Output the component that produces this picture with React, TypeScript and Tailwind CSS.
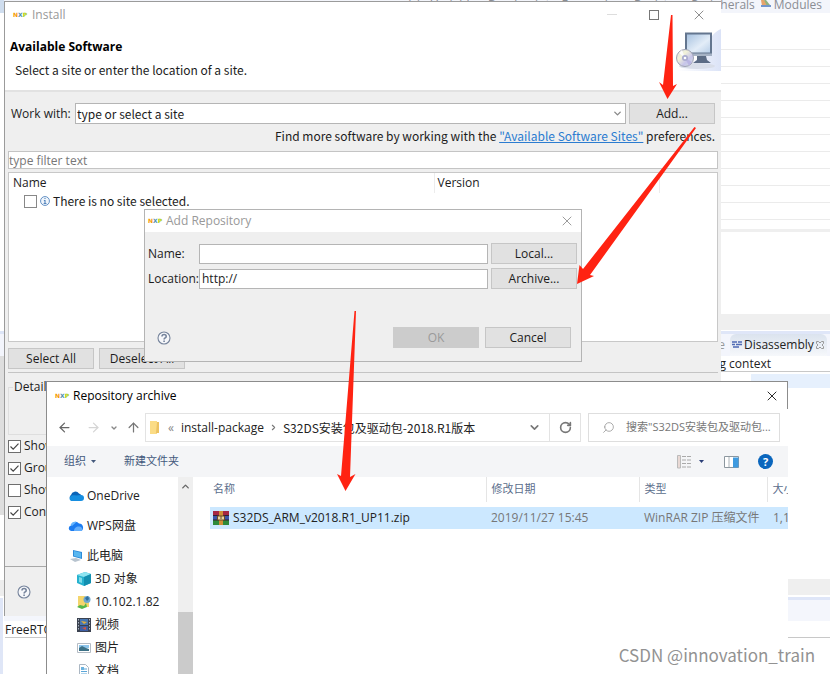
import React from 'react';
import { ArrowLeft, ArrowRight, ArrowUp, ChevronDown, ChevronRight, ChevronUp, RotateCw, Search, X } from 'lucide-react';

const NxpLogo: React.FC = () => (
  <span className="flex w-[13px] shrink-0 font-['DejaVu_Sans'] text-[6px] leading-none font-bold" aria-hidden="true">
    <span className="text-[#f59a00]">N</span>
    <span className="text-[#4f8fb0]">X</span>
    <span className="text-[#a8cc00]">P</span>
  </span>
);

const PushButton: React.FC<React.ButtonHTMLAttributes<HTMLButtonElement>> = ({ children, ...rest }) => (
  <button
    type="button"
    className="h-[21px] w-[86px] shrink-0 border border-[#c6c6c6] bg-[#e1e1e1] text-center leading-[18px] whitespace-nowrap disabled:border-[#cccccc] disabled:bg-[#cccccc] disabled:text-[#9a9a9a]"
    {...rest}
  >
    {children}
  </button>
);

const HelpButton: React.FC = () => (
  <button type="button" aria-label="Help" className="block size-[14px] shrink-0">
    <svg viewBox="0 0 14 14" className="size-[14px]" fill="none" stroke="#76849c">
      <circle cx="7" cy="7" r="6" fill="#f6f7fa" strokeWidth="1.1" />
      <path d="M5 5.6c0-3 4.2-2.6 4.2-.2C9.200 7 7.100 6.900 7.100 8.500" strokeWidth="1.6" />
      <path d="M7.100 9.600v1.500" strokeWidth="1.6" />
    </svg>
  </button>
);

const CheckMark: React.FC<{ label: string; checked: boolean }> = ({ label, checked }) => (
  <label className="flex h-[22px] items-center gap-[3px] whitespace-nowrap">
    <span className="relative size-[13px] shrink-0">
      <input
        type="checkbox"
        defaultChecked={checked}
        className="peer block size-[13px] appearance-none border border-[#6e6e6e] bg-white"
      />
      <svg
        viewBox="0 0 13 13"
        className="pointer-events-none absolute inset-0 hidden size-[13px] peer-checked:block"
        fill="none"
        stroke="#444"
        strokeWidth="1.2"
      >
        <path d="M2.500 6.500 5.200 9.200 10.500 3.700" />
      </svg>
    </span>
    {label}
  </label>
);

const MonitorArt: React.FC = () => (
  <svg viewBox="0 0 46 42" className="h-[42px] w-[46px]" aria-hidden="true">
    <defs>
      <linearGradient id="screen" x1="0" y1="0" x2="1" y2="1">
        <stop offset="0" stopColor="#a9c3e0" />
        <stop offset="0.6" stopColor="#e3edf8" />
        <stop offset="1" stopColor="#b9cfe8" />
      </linearGradient>
      <linearGradient id="disc" x1="0" y1="0" x2="1" y2="1">
        <stop offset="0" stopColor="#d8dce4" />
        <stop offset="0.35" stopColor="#f2f2d8" />
        <stop offset="0.65" stopColor="#c6c4ea" />
        <stop offset="1" stopColor="#d9e6dd" />
      </linearGradient>
      <linearGradient id="swoosh" x1="0" y1="0" x2="1" y2="0">
        <stop offset="0" stopColor="#ffffff" />
        <stop offset="1" stopColor="#dbe3f7" />
      </linearGradient>
    </defs>
    <path d="M46 0C34 5 34 16 28 24S10 38 2 42h44z" fill="url(#swoosh)" />
    <ellipse cx="22" cy="37" rx="18" ry="3" fill="#d9dee9" />
    <path d="M22 27h9l1 4 4 3H18l4-3z" fill="#5c6c85" />
    <path d="M10 3.500h27v23H10z" fill="#64768f" />
    <path d="M12 5.500h23v18H12z" fill="url(#screen)" />
    <path d="M10 24.500h27v2H10z" fill="#a5b2c5" />
    <circle cx="10" cy="29" r="8.500" fill="url(#disc)" stroke="#a0a3b4" />
    <path d="m10 29-6-5 3-3z" fill="#fbfbfb" />
    <path d="m10 29 7 4-3 4z" fill="#b9b5e2" />
    <circle cx="10" cy="29" r="3" fill="#aaaccf" />
    <circle cx="10" cy="29" r="1.300" fill="#fff" />
  </svg>
);

const Workbench: React.FC = () => (
  <div className="absolute inset-0 flex">
    <div className="flex w-1 shrink-0 flex-col">
      <div className="h-[13px] bg-[#cfddee]" />
      <div className="h-[318px]" />
      <div className="h-[3px] bg-[#dde5f7]" />
      <div className="h-[22px] bg-[#f3f5fc]" />
      <div className="h-[159px] bg-[#dedede]" />
      <div className="h-[65px]" />
      <div className="h-4 bg-[#ededed]" />
      <div className="mt-0.5 mr-px flex-1 bg-[#dfe6f7]" />
    </div>
    <div className="flex min-w-0 flex-1 flex-col">
      <div className="flex h-[13px] items-start justify-end gap-[6px] bg-[#f3f5fb] pr-2 text-xs leading-[9px] text-[#8a8d94]">
        <span>(x)= Variables</span>
        <span>Breakpoints</span>
        <span>Expressions</span>
        <span>Registers</span>
        <span>Peripherals</span>
        <span className="flex gap-[3px]">
          <svg viewBox="0 0 10 9" className="h-[9px] w-[10px]" aria-hidden="true">
            <path d="M0 0h3l6 6H1z" fill="#e6a46c" />
            <path d="M3 0h2l4 5-3 1z" fill="#8fb27d" />
            <path d="M0 5h10v2H0z" fill="#7295cc" />
          </svg>
          Modules
        </span>
      </div>
      <div className="flex flex-col pt-5">
        {Array.from({ length: 11 }, (_, i) => (
          <div key={i} className="h-[17px] border-b border-[#ebebeb]" />
        ))}
      </div>
      <div className="mt-[9px] h-[3px] bg-[#efefef]" />
      <div className="mt-[82px] h-4 bg-[#efefef]" />
      <div className="mt-px h-[3px] bg-[#dfe6f8]" />
      <div className="flex h-[22px] items-center justify-end bg-[#f3f5fc] pr-[3px] text-xs">
        <span className="pr-[5px] text-[#999]">Console</span>
        <span className="flex h-[22px] w-[97px] items-center gap-[2px] rounded-t-md bg-linear-to-b from-[#dbe3ee] to-[#f6f8fb] pl-[2px] whitespace-nowrap">
          <svg viewBox="0 0 10 8" className="h-2 w-[10px] shrink-0" stroke="#4e6ab4" aria-hidden="true">
            <path d="M0 1h5M6 1h4M0 3.500h3M4 3.500h6M1 6h6" strokeWidth="1.500" />
          </svg>
          Disassembly
          <svg viewBox="0 0 8 8" className="size-2 shrink-0" fill="none" stroke="#999" aria-hidden="true">
            <path d="M.5.500h2L4 2 5.500.500h2v2L6 4l1.500 1.500v2h-2L4 6 2.500 7.500h-2v-2L2 4 .500 2.500z" />
          </svg>
        </span>
      </div>
      <div className="h-4 border-b border-[#c8c8c8] pr-[59px] text-right text-xs leading-4">No debugging context</div>
      <div className="mt-0.5 ml-auto h-[14px] w-[79px] bg-[#e6f0fd]" />
      <div className="mt-[191px] h-4 bg-[#efefef]" />
      <div className="mt-0.5 h-[3px] bg-[#dfe6f8]" />
      <div className="h-[21px] bg-[#f4f6fc]" />
      <div className="ml-px h-[17px] border-b border-[#c8c8c8] text-xs leading-[18px]">FreeRTOS</div>
    </div>
  </div>
);

const InstallWindow: React.FC = () => (
  <section
    aria-label="Install"
    className="absolute top-px right-[109px] left-1 border-t border-l border-[#9b9b9b] bg-[#efefef] text-xs text-[#1c1c1c]"
  >
    <div className="flex h-[27px] items-center bg-white pr-[17px] pb-0.5 pl-2">
      <NxpLogo />
      <h1 className="pl-[6px] text-[#999]">Install</h1>
      <div className="ml-auto flex items-center gap-[32px] text-[#777]">
        <button type="button" aria-label="Minimize" className="h-px w-[10px] bg-[#ddd]" />
        <button type="button" aria-label="Maximize" className="size-[10px] border border-[#777]" />
        <button type="button" aria-label="Close" className="-mr-[3px]">
          <X size={16} strokeWidth={1.25} />
        </button>
      </div>
    </div>
    <header className="flex h-[63px] items-start justify-between border-b-2 border-[#e2e2e2] bg-white">
      <div className="pl-[5px]">
        <h2 className="pt-2 leading-5 font-bold text-black">Available Software</h2>
        <p className="pt-[3px] pl-[5px] font-['Noto_Sans_CJK_SC',sans-serif] leading-5">
          Select a site or enter the location of a site.
        </p>
      </div>
      <MonitorArt />
    </header>

    <div className="px-[3px] pt-[11px]">
      <div className="flex items-center gap-[3px] pr-[3px]">
        <label htmlFor="site" className="w-[64px] shrink-0 pl-[3px] whitespace-nowrap">Work with:</label>
        <div className="relative flex-1">
          <select
            id="site"
            className="block h-[21px] w-full appearance-none border border-[#b5b5b5] bg-white pl-px font-['Noto_Sans_CJK_SC',sans-serif] leading-[18px]"
          >
            <option>type or select a site</option>
          </select>
          <ChevronDown size={11} strokeWidth={3} className="pointer-events-none absolute top-[5px] right-[3px] text-[#888]" />
        </div>
        <PushButton>Add...</PushButton>
      </div>
      <p className="pt-[2px] pr-[3px] text-right font-['Noto_Sans_CJK_SC',sans-serif] leading-5">
        Find more software by working with the{' '}
        <a href="#sites" className="text-[#2b7cd0] underline">"Available Software Sites"</a> preferences.
      </p>
      <input
        type="text"
        aria-label="Filter"
        placeholder="type filter text"
        className="mt-[5px] block h-[18px] w-full border border-[#c4c4c4] bg-white leading-4 placeholder:text-[#777]"
      />
      <div className="mt-[3px] h-[170px] border border-[#c8c8c8] bg-white">
        <table className="w-full table-fixed text-left">
          <thead>
            <tr className="h-5">
              <th className="w-[425px] border-r border-[#ececec] pl-1 font-normal">Name</th>
              <th className="border-r border-[#ececec] pl-[3px] font-normal">Version</th>
              <th className="w-[58px]" aria-label="Spacer" />
            </tr>
          </thead>
          <tbody>
            <tr>
              <td colSpan={3}>
                <label className="flex h-4 items-center gap-[3px] pl-[15px] font-['Noto_Sans_CJK_SC',sans-serif]">
                  <input type="checkbox" className="size-[13px] appearance-none border border-[#888] bg-white" />
                  <svg viewBox="0 0 9 9" className="size-[10px]" fill="none" stroke="#5485bd" aria-hidden="true">
                    <circle cx="4.500" cy="4.500" r="4" fill="#eef4fb" strokeWidth=".8" />
                    <path d="M4.500 1.700v1M3.500 4h1v2.500M3.300 6.800h2.500" />
                  </svg>
                  There is no site selected.
                </label>
              </td>
            </tr>
          </tbody>
        </table>
      </div>
      <div className="mt-[6px] flex gap-[5px]">
        <PushButton>Select All</PushButton>
        <PushButton>Deselect All</PushButton>
      </div>
      <hr className="mt-[3px] border-[#c4c4c4]" />
      <fieldset className="mt-[4px] h-[58px] border border-[#dedede]">
        <legend className="ml-[4px] px-px leading-5">Details</legend>
      </fieldset>
      <div>
        <CheckMark label="Show only the latest versions of available software" checked />
        <CheckMark label="Group items by category" checked />
        <CheckMark label="Show only software applicable to target environment" checked={false} />
        <CheckMark label="Contact all update sites during install to find required software" checked />
      </div>
    </div>
    <footer className="mt-[43px] flex h-[50px] items-center border-t border-[#a8a8a8] pl-[12px]">
      <HelpButton />
    </footer>
  </section>
);

const AddRepositoryDialog: React.FC = () => (
  <section
    aria-label="Add Repository"
    className="absolute top-[209px] left-36 w-[438px] border border-[#b4b4b4] bg-[#efefef] text-xs text-[#1c1c1c]"
  >
    <div className="flex h-[22px] items-center bg-white pr-[6px] pl-[3px]">
      <NxpLogo />
      <h2 className="pl-[5px] text-[#999]">Add Repository</h2>
      <button type="button" aria-label="Close" className="ml-auto text-[#888]">
        <X size={16} strokeWidth={1.25} />
      </button>
    </div>
    <div className="flex flex-col gap-1 pt-[11px] pr-1 pl-[3px]">
      <div className="flex items-center gap-[3px]">
        <label htmlFor="repo-name" className="w-12 shrink-0">Name:</label>
        <input id="repo-name" type="text" className="h-5 min-w-0 flex-1 border border-[#b5b5b5] bg-white px-0.5" />
        <PushButton>Local...</PushButton>
      </div>
      <div className="flex items-center gap-[3px]">
        <label htmlFor="repo-location" className="w-12 shrink-0">Location:</label>
        <input
          id="repo-location"
          type="text"
          defaultValue="http://"
          className="h-5 min-w-0 flex-1 border border-[#b5b5b5] bg-white px-0.5"
        />
        <PushButton>Archive...</PushButton>
      </div>
    </div>
    <div className="flex items-center gap-[6px] pt-[38px] pr-[10px] pb-[13px] pl-3">
      <HelpButton />
      <span className="flex-1" />
      <PushButton disabled>OK</PushButton>
      <PushButton>Cancel</PushButton>
    </div>
  </section>
);

const OneDriveIcon = () => (
  <svg viewBox="0 0 16 14" className="h-[14px] w-4">
    <path d="M3 11a3 3 0 0 1 0-5 4.500 4.500 0 0 1 8-1.500A4 4 0 0 1 13 11z" fill="#0a64b8" />
    <path d="M3 12a3 3 0 0 1 1-5.500c2-.500 4 .500 9-.500a3 3 0 0 1 0 6z" fill="#168ee0" />
  </svg>
);

const WpsIcon = () => (
  <svg viewBox="0 0 16 14" className="h-[14px] w-4">
    <path d="M3 12a2.800 2.800 0 0 1 0-5.500 4.500 4.500 0 0 1 8-2A4 4 0 0 1 13 12z" fill="#1c7cf0" />
    <path d="M6 12c0-4 5-6 8-3 1 2 0 3-1 3z" fill="#63aefb" />
    <path d="M2.500 6c1-3 4-4 6-3L4 7z" fill="#66b6ff" />
  </svg>
);

const PcIcon = () => (
  <svg viewBox="0 0 16 14" className="h-[14px] w-4">
    <path d="m4 1 9 2v7L4 7.500z" fill="#2d8ad8" />
    <path d="m5 2 7 1.700v5L5 7z" fill="#58b7f0" />
    <path d="m1 10 6-1 5 2-6 2z" fill="#b8c4cf" />
  </svg>
);

const CubeIcon = () => (
  <svg viewBox="0 0 14 14" className="size-[14px]">
    <path d="M0 3 8 0l6 2v9l-7 3-7-3z" fill="#26b2cf" />
    <path d="m0 3 8-3 6 2-7 3z" fill="#8ee4f0" />
    <path d="m7 5 7-3v9l-7 3z" fill="#128fb0" />
    <path d="m2 5 3 1v5l-3-1z" fill="#7fdbe8" />
  </svg>
);

const NetworkFolderIcon = () => (
  <svg viewBox="0 0 14 14" className="size-[14px]">
    <path d="M1 1h7l1 2h3v9H1z" fill="#f4d56c" />
    <circle cx="10" cy="4.500" r="3.500" fill="#6da7cf" />
    <path d="m8 3 3-2 1 3-2 2z" fill="#326f9e" />
    <path d="m0 12 3-2 4 1 2-3 1 4-5 2z" fill="#55b64a" />
  </svg>
);

const VideoIcon = () => (
  <svg viewBox="0 0 14 14" className="size-[14px]">
    <path d="M0 0h14v14H0z" fill="#3b4250" />
    <path d="M3 1h8v6H3z" fill="#4777b3" />
    <path d="M3 8h8v5H3z" fill="#3e5fa5" />
    <path d="m4 3 6 1-3 2z" fill="#e2ae3a" />
    <path d="m5 10 4-1v3z" fill="#cf5540" />
    <path d="M1.500 1v12M12.500 1v12" stroke="#aab4c2" strokeDasharray="1.500 1.500" />
  </svg>
);

const PictureIcon = () => (
  <svg viewBox="0 0 14 14" className="size-[14px]">
    <path d="M.5 2.500h13v9H.5z" fill="#fff" stroke="#b4bcc5" />
    <path d="M2 4h10v3H2z" fill="#8dc5eb" />
    <path d="m2 7 3-2 4 2 3 1v2H2z" fill="#3c7186" />
  </svg>
);

const DocumentIcon = () => (
  <svg viewBox="0 0 14 14" className="size-[14px]">
    <path d="M2.500.500h6l3 3v10h-9z" fill="#fff" stroke="#abb7c3" />
    <path d="M4 5h6M4 7.500h6M4 10h6" stroke="#5ba6d8" />
    <path d="M4 3h3v3H4z" fill="#6cb3df" />
  </svg>
);

const places = [
  { name: 'OneDrive', icon: OneDriveIcon, row: 'h-[30px] pl-[21px] gap-[3px]' },
  { name: 'WPS网盘', icon: WpsIcon, row: 'h-[30px] pl-[21px] gap-[3px] mb-[3px]' },
  { name: '此电脑', icon: PcIcon, row: 'h-[23px] pl-[22px] gap-[2px]' },
  { name: '3D 对象', icon: CubeIcon, row: 'h-[23px] pl-[30px] gap-[4px]' },
  { name: '10.102.1.82', icon: NetworkFolderIcon, row: 'h-[23px] pl-[30px] gap-[4px]' },
  { name: '视频', icon: VideoIcon, row: 'h-[23px] pl-[30px] gap-[4px]' },
  { name: '图片', icon: PictureIcon, row: 'h-[23px] pl-[30px] gap-[4px]' },
  { name: '文档', icon: DocumentIcon, row: 'h-[23px] pl-[30px] gap-[4px]' },
];

const ZipIcon = () => (
  <svg viewBox="0 0 16 14" className="h-[14px] w-4 shrink-0" aria-hidden="true">
    <path d="M0 0h16v5H0z" fill="#a62743" />
    <path d="M0 5h16v4H0z" fill="#3b55a8" />
    <path d="M0 9h16v5H0z" fill="#2d8a3b" />
    <path d="M0 4.500h16M0 9h16" stroke="#302033" />
    <path d="M6 0h4v14H6z" fill="#d18f36" />
    <path d="M4.500 5h7v4h-7z" fill="#e7d6a0" stroke="#6d4a27" />
    <path d="M8 5v3" stroke="#6d4a27" />
  </svg>
);

const ArchiveDialog: React.FC = () => (
  <section
    aria-label="Repository archive"
    className="absolute top-[381px] right-[42px] bottom-0 left-[46px] flex flex-col overflow-hidden border-t border-l border-[#8c8c8c] bg-white text-xs text-[#222]"
  >
    <div className="flex h-[27px] shrink-0 items-center border-r border-[#8c8c8c] pr-[7px] pl-2">
      <NxpLogo />
      <h2 className="pl-[5px] text-black">Repository archive</h2>
      <button type="button" aria-label="Close" className="ml-auto text-black">
        <X size={16} strokeWidth={1.25} />
      </button>
    </div>

    <div className="mt-[4px] flex h-[29px] shrink-0 items-center pr-2 pl-[10px]">
      <button type="button" aria-label="Back" className="text-[#666]"><ArrowLeft size={15} strokeWidth={2} /></button>
      <button type="button" aria-label="Forward" className="ml-[14px] text-[#d5d5d5]"><ArrowRight size={15} strokeWidth={2} /></button>
      <button type="button" aria-label="Recent locations" className="ml-[9px] text-[#888]"><ChevronDown size={8} strokeWidth={4} /></button>
      <button type="button" aria-label="Up" className="ml-[8px] text-[#777]"><ArrowUp size={15} strokeWidth={2} /></button>
      <div className="ml-1 flex h-[29px] min-w-0 flex-1 items-center border border-[#e3e3e3] whitespace-nowrap">
        <svg viewBox="0 0 10 13" className="ml-[4px] h-[13px] w-[10px]" aria-hidden="true">
          <path d="M0 0h7v13H0z" fill="#fbdc86" />
          <path d="M7 1h2v11H6z" fill="#ecc262" />
        </svg>
        <span className="ml-2 text-[#888]">«</span>
        <span className="ml-[7px]">install-package</span>
        <ChevronRight size={9} strokeWidth={3} className="mx-[5px] text-[#777]" />
        <span className="font-['Noto_Sans_CJK_SC',sans-serif]">S32DS安装包及驱动包-2018.R1版本</span>
        <button type="button" aria-label="Previous locations" className="ml-auto pr-[8px] text-[#777]">
          <ChevronDown size={13} strokeWidth={3} />
        </button>
        <button type="button" aria-label="Refresh" className="flex h-full w-[31px] items-center justify-center border-l border-[#e3e3e3] text-[#777]">
          <RotateCw size={13} strokeWidth={3} />
        </button>
      </div>
      <label className="ml-[7px] flex h-[29px] w-[192px] items-center border border-[#dedede] pl-[13px]">
        <Search size={13} strokeWidth={1.5} className="shrink-0 -scale-x-100 text-[#999]" />
        <input
          type="text"
          aria-label="Search"
          placeholder='搜索"S32DS安装包及驱动包...'
          className="ml-[11px] min-w-0 flex-1 text-[11px] placeholder:text-[#777]"
        />
      </label>
    </div>

    <div className="mt-1 flex h-[31px] shrink-0 items-center bg-[#f4f5f7] pr-[15px] pl-[17px] text-[11px] text-[#44597c]">
      <button type="button" className="flex items-center gap-[5px]">
        组织
        <svg viewBox="0 0 5 3" className="h-[3px] w-[5px]" aria-hidden="true"><path d="M0 0h5L2.500 3z" fill="#44597c" /></svg>
      </button>
      <button type="button" className="ml-[28px]">新建文件夹</button>
      <button type="button" aria-label="View" className="ml-auto flex items-center gap-2">
        <svg viewBox="0 0 14 14" className="size-[14px]">
          <path d="M.5.500h3v12.500h-3z" fill="#e9d9d5" stroke="#bbb" />
          <path d="M5 1.500h9M5 5h9M5 8.500h9M5 12h9" stroke="#aaa" strokeDasharray="4 1" />
        </svg>
        <svg viewBox="0 0 5 3" className="h-[3px] w-[5px]"><path d="M0 0h5L2.500 3z" fill="#2b3f77" /></svg>
      </button>
      <button type="button" aria-label="Preview pane" className="ml-5">
        <svg viewBox="0 0 15 12" className="h-3 w-[15px]">
          <path d="M.5.500h14v11H.5z" fill="#fff" stroke="#8c979f" />
          <path d="M5 1v10" stroke="#aab2b8" />
          <path d="M9 1.500h5.500v10H9z" fill="#3f9be0" />
        </svg>
      </button>
      <button type="button" aria-label="Get help" className="ml-[19px] size-[15px] rounded-full bg-[#0a66bd] leading-[15px] font-bold text-white">
        ?
      </button>
    </div>

    <div className="flex min-h-0 flex-1">
      <nav aria-label="Places" className="w-[131px] shrink-0 overflow-hidden pt-1">
        {places.map(({ name, icon: Icon, row }) => (
          <a key={name} href="#place" className={`flex items-center whitespace-nowrap ${row}`}>
            <Icon />
            {name}
          </a>
        ))}
      </nav>
      <div className="flex w-[15px] shrink-0 flex-col items-center bg-[#efefef]" aria-hidden="true">
        <ChevronUp size={11} strokeWidth={3} className="mt-1 shrink-0 text-[#666]" />
        <div className="mt-[120px] w-full flex-1 bg-[#cbcbcb]" />
      </div>
      <div className="min-w-0 flex-1 overflow-hidden pl-[17px]">
        <table className="w-full table-fixed border-collapse text-left whitespace-nowrap">
          <thead>
            <tr className="h-[25px] text-[11px] text-[#5b6e8c]">
              <th className="w-[276px] border-r border-[#e5e5e5] pl-[3px] font-normal">名称</th>
              <th className="w-[153px] border-r border-[#e5e5e5] pl-[5px] font-normal">修改日期</th>
              <th className="w-[128px] border-r border-[#e5e5e5] pl-[5px] font-normal">类型</th>
              <th className="overflow-hidden pl-[5px] font-normal">大小</th>
            </tr>
          </thead>
          <tbody>
            <tr className="h-[5px]"><td colSpan={4} /></tr>
            <tr className="h-[22px] bg-[#cce8ff] text-[#777]">
              <td className="text-[#222]">
                <span className="flex items-center gap-[4px] pl-[3px]">
                  <ZipIcon />
                  S32DS_ARM_v2018.R1_UP11.zip
                </span>
              </td>
              <td className="pl-[5px]">2019/11/27 15:45</td>
              <td className="pl-[5px]">WinRAR ZIP 压缩文件</td>
              <td className="overflow-hidden pl-[6px]">1,184,652 KB</td>
            </tr>
          </tbody>
        </table>
      </div>
    </div>
  </section>
);

const Arrows: React.FC = () => (
  <svg width="830" height="674" className="pointer-events-none absolute top-0 left-0" fill="#ff2312" aria-hidden="true">
    <path d="M671 15h1.500l.500 71 4-2-9.500 15-8.500-17 4 3z" />
    <path d="m694.500 127 1.500 1-106 147 4 1-17 8 2.500-19 3.500 4z" />
    <path d="M354.500 311h1.500l-6 166 5.500-3-10 17-8.500-17 4 2z" />
  </svg>
);

export default function App() {
  return (
    <main className="relative min-h-screen overflow-hidden bg-white font-['Open_Sans','Noto_Sans_CJK_SC',sans-serif] text-[#222]">
      <Workbench />
      <InstallWindow />
      <AddRepositoryDialog />
      <ArchiveDialog />
      <Arrows />
      <p className="absolute right-[15px] bottom-[7px] font-['Noto_Sans_CJK_SC',sans-serif] text-[17px] leading-6 text-[#929292]">
        CSDN @innovation_train
      </p>
    </main>
  );
}
